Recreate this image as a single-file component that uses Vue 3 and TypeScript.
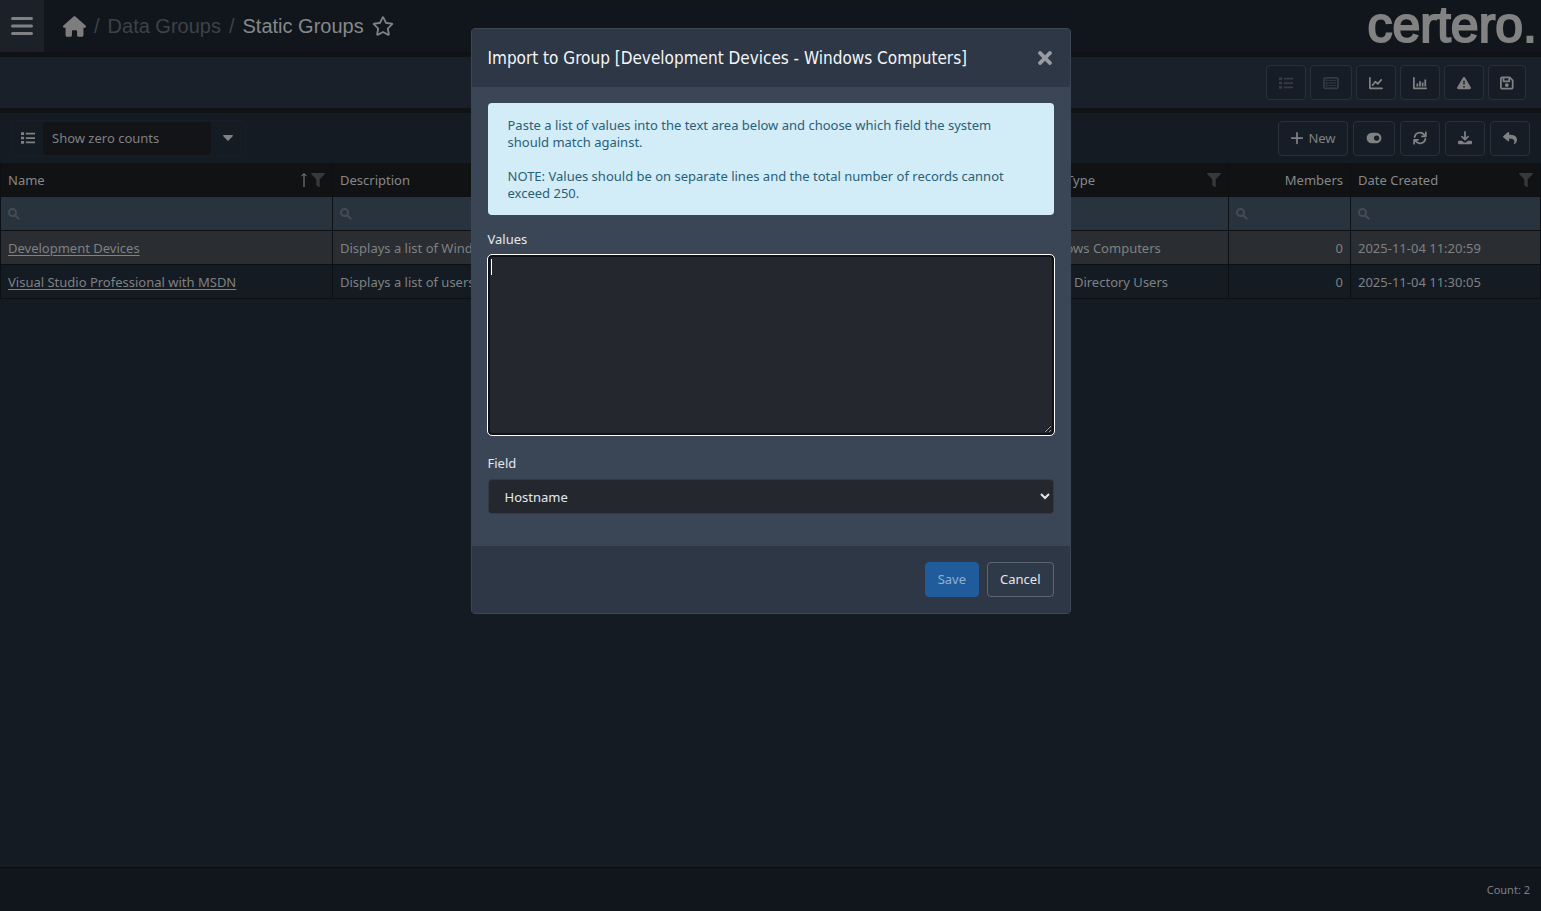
<script setup lang="ts">
import { ref } from 'vue'

interface Shape {
  d: string
  line?: boolean
}
interface Icon {
  box: string
  shapes: Shape[]
}
interface Tool {
  icon: string
  label: string
  text?: string
  size?: string
  off?: boolean
}
interface Row {
  name: string
  description: string
  type: string
  members: number
  created: string
}

const icons: Record<string, Icon> = {
  list: { box: '0 0 16 16', shapes: [{ d: 'M0 1.500h3.500v3H0zM0 6.500h3.500v3H0zM0 11.500h3.500v3H0zM5.500 2H16v2H5.500zM5.500 7H16v2H5.500zM5.500 12H16v2H5.500z' }] },
  tableList: {
    box: '0 0 18 16',
    shapes: [
      { d: 'M2.500 2h13A1.500 1.500 0 0 1 17 3.500v9a1.500 1.500 0 0 1-1.500 1.500h-13A1.500 1.500 0 0 1 1 12.500v-9A1.500 1.500 0 0 1 2.500 2z', line: true },
      { d: 'M3 4h2v2H3zM3 7h2v2H3zM3 10h2v2H3zM6 4.500h9v1H6zM6 7.500h9v1H6zM6 10.500h9v1H6z' },
    ],
  },
  line: { box: '0 0 16 16', shapes: [{ d: 'M1 2v12h14M4 10.500l3.200-4 2.800 2.500L14 4.500', line: true }] },
  bars: { box: '0 0 16 16', shapes: [{ d: 'M1 2v12h14', line: true }, { d: 'M4 8.500h2V12H4zM7 6h2v6H7zM10 7.500h2V12h-2zM13 4h2v8h-2z' }] },
  warning: { box: '0 0 16 16', shapes: [{ d: 'M8 1c.5 0 .9.300 1.200.7l6.500 11.200c.6 1-.1 2.100-1.200 2.100h-13C.4 15-.3 13.900.3 12.900L6.800 1.700C7.100 1.300 7.500 1 8 1zM7.200 5.500v4.300h1.600V5.500zM7.100 11.300v1.800h1.800v-1.800z' }] },
  save: {
    box: '0 0 16 16',
    shapes: [
      { d: 'M2.500 1.500h8.500L14.500 5v8c0 .8-.7 1.500-1.500 1.500H2.500c-.8 0-1.500-.7-1.500-1.500V3c0-.8.7-1.500 1.500-1.500zM4 2v4h6.500V2', line: true },
      { d: 'M7.800 8.200a2.200 2.200 0 1 1 0 4.400 2.200 2.200 0 0 1 0-4.400z' },
    ],
  },
  plus: { box: '0 0 16 16', shapes: [{ d: 'M8 2v12M2 8h12', line: true }] },
  toggle: { box: '0 0 18 16', shapes: [{ d: 'M6.500 2h5a6 6 0 0 1 0 12h-5a6 6 0 0 1 0-12zM12 5a3 3 0 1 0 0 6 3 3 0 0 0 0-6z' }] },
  sync: { box: '0 0 16 16', shapes: [{ d: 'M1.800 7a6.200 6.200 0 0 1 11-2.800L14.300 5.700M14.700 1.500v4.500h-4.500M14.200 9a6.200 6.200 0 0 1-11 2.800L1.700 10.300M1.300 14.500V10h4.500', line: true }] },
  download: {
    box: '0 0 16 16',
    shapes: [
      { d: 'M8 1v8.500M4.500 6.500L8 10l3.500-3.500', line: true },
      { d: 'M1.500 11h3L7 13h2l2.500-2h3c.8 0 1.500.6 1.500 1.400v1.200c0 .8-.7 1.400-1.500 1.400h-13C.7 15 0 14.400 0 13.600v-1.200C0 11.600.7 11 1.500 11z' },
    ],
  },
  reply: {
    box: '0 0 512 512',
    shapes: [{ d: 'M8.309 189.836L184.313 37.851C199.719 24.546 224 35.347 224 56.015v80.053c160.629 1.839 288 34.032 288 186.258 0 61.441-39.581 122.309-83.333 154.132-13.653 9.931-33.111-2.533-28.077-18.631 45.344-145.012-21.507-183.510-176.590-185.742V360c0 20.700-24.300 31.453-39.687 18.164l-176.004-151.990c-11.071-9.562-11.086-26.753 0-36.338z' }],
  },
}

const pageTools: Tool[] = [
  { icon: 'list', label: 'List view', off: true },
  { icon: 'tableList', label: 'Table view', size: 'wide', off: true },
  { icon: 'line', label: 'Line chart' },
  { icon: 'bars', label: 'Bar chart' },
  { icon: 'warning', label: 'Alerts' },
  { icon: 'save', label: 'Save view', size: 'narrow' },
]

const gridTools: Tool[] = [
  { icon: 'plus', label: 'New', text: 'New', size: 'labelled' },
  { icon: 'toggle', label: 'Toggle', size: 'wide' },
  { icon: 'sync', label: 'Refresh' },
  { icon: 'download', label: 'Download' },
  { icon: 'reply', label: 'Back' },
]

const columns = [
  { key: 'name', title: 'Name', filter: true, sorted: true },
  { key: 'description', title: 'Description' },
  { key: 'type', title: 'Data Type', filter: true },
  { key: 'members', title: 'Members' },
  { key: 'created', title: 'Date Created', filter: true },
]

const rows: Row[] = [
  { name: 'Development Devices', description: 'Displays a list of Windows Computers', type: 'Windows Computers', members: 0, created: '2025-11-04 11:20:59' },
  { name: 'Visual Studio Professional with MSDN', description: 'Displays a list of users', type: 'Active Directory Users', members: 0, created: '2025-11-04 11:30:05' },
]

const view = ref('Show zero counts')
const values = ref('')
const field = ref('Hostname')
</script>

<template>
  <div class="page">
    <header class="top">
      <button class="burger" type="button" aria-label="Menu">
        <svg viewBox="0 0 22 20"><path d="M1.500 2.500h19M1.500 10h19M1.500 17.500h19" /></svg>
      </button>
      <nav class="crumbs" aria-label="Breadcrumb">
        <a href="#" class="home" aria-label="Home">
          <svg viewBox="0 0 576 512"><path d="M575.800 255.500c0 18-15 32.100-32 32.100h-32l.7 160.200c0 2.700-.2 5.400-.5 8.100V472c0 22.100-17.900 40-40 40H392c-22.100 0-40-17.900-40-40V384c0-17.700-14.300-32-32-32H256c-17.700 0-32 14.300-32 32v88c0 22.100-17.900 40-40 40H104c-22.100 0-40-17.900-40-40V287.600H32c-18 0-32-14-32-32.100c0-9 3-17 10-24L266.400 8c7-7 15-8 22-8s15 2 21 7L564.800 231.500c8 7 12 15 11 24z" /></svg>
        </a>
        <span class="slash">/</span>
        <a href="#" class="parent">Data Groups</a>
        <span class="slash">/</span>
        <span class="current">Static Groups</span>
        <button class="star" type="button" aria-label="Favourite">
          <svg viewBox="0 0 576 512"><path d="M528.100 171.500L382 150.200 316.700 17.800c-11.700-23.600-45.600-23.900-57.400 0L194 150.200 47.900 171.500c-26.200 3.800-36.700 36.100-17.700 54.600l105.700 103-25 145.500c-4.500 26.300 23.200 46 46.400 33.700L288 439.600l130.700 68.700c23.200 12.200 50.900-7.400 46.400-33.700l-25-145.500 105.700-103c19-18.500 8.500-50.800-17.700-54.600zM388.600 312.300l23.700 138.400L288 385.400l-124.300 65.300 23.700-138.400-100.600-98 139-20.200 62.200-126 62.200 126 139 20.200-100.600 98z" /></svg>
        </button>
      </nav>
      <div class="logo">certero.</div>
    </header>

    <div class="bar page-bar">
      <button v-for="t in pageTools" :key="t.icon" type="button" class="tool" :class="t.size" :disabled="t.off" :aria-label="t.label">
        <svg :viewBox="icons[t.icon].box"><path v-for="s in icons[t.icon].shapes" :key="s.d" :d="s.d" :class="{ line: s.line }" /></svg>
      </button>
    </div>

    <div class="bar grid-bar">
      <div class="view">
        <svg class="view-icon" :viewBox="icons.list.box"><path :d="icons.list.shapes[0].d" /></svg>
        <input v-model="view" type="text" aria-label="View" />
        <button type="button" aria-label="Choose view"><svg viewBox="0 0 10 6"><path d="M.8 0h8.400c.7 0 1 .7.5 1.200L5.600 5.600a.8.8 0 0 1-1.200 0L.3 1.200C-.2.7.1 0 .8 0z" /></svg></button>
      </div>
      <button v-for="t in gridTools" :key="t.icon" type="button" class="tool" :class="t.size" :aria-label="t.label">
        <svg :viewBox="icons[t.icon].box"><path v-for="s in icons[t.icon].shapes" :key="s.d" :d="s.d" :class="{ line: s.line }" /></svg>
        <span v-if="t.text">{{ t.text }}</span>
      </button>
    </div>

    <main class="grid">
      <table>
        <colgroup>
          <col class="c-name" /><col /><col class="c-type" /><col class="c-members" /><col class="c-created" />
        </colgroup>
        <thead>
          <tr class="titles">
            <th v-for="c in columns" :key="c.key" scope="col">
              <div class="title" :class="{ end: c.key === 'members' }">
                <span>{{ c.title }}</span>
                <svg v-if="c.sorted" class="sort" viewBox="0 0 8 16"><path d="M4 15V2M1.500 4.200L4 1.500l2.500 2.700" /></svg>
                <svg v-if="c.filter" class="funnel" viewBox="0 0 512 512"><path d="M487.976 0H24.028C2.710 0-8.047 25.866 7.058 40.971L192 225.941V432c0 7.831 3.821 15.170 10.237 19.662l80 55.980C298.020 518.690 320 507.493 320 487.980V225.941l184.947-184.970C520.021 25.896 509.338 0 487.976 0z" /></svg>
              </div>
            </th>
          </tr>
          <tr class="filters">
            <td v-for="c in columns" :key="c.key">
              <label class="search">
                <svg viewBox="0 0 12 12"><path d="M4.500 1a3.500 3.500 0 1 1 0 7 3.500 3.500 0 0 1 0-7zM7.200 7.200L11.200 11.200" /></svg>
                <input type="text" :aria-label="'Filter ' + c.title" />
              </label>
            </td>
          </tr>
        </thead>
        <tbody>
          <tr v-for="(r, i) in rows" :key="r.name" :class="{ selected: i === 0 }">
            <td><a href="#">{{ r.name }}</a></td>
            <td>{{ r.description }}</td>
            <td>{{ r.type }}</td>
            <td class="num">{{ r.members }}</td>
            <td>{{ r.created }}</td>
          </tr>
        </tbody>
      </table>
    </main>

    <footer class="foot">Count: 2</footer>

    <div class="overlay">
      <form class="modal" role="dialog" aria-labelledby="dialog-title" @submit.prevent>
        <div class="modal-head">
          <h2 id="dialog-title">Import to Group [Development Devices - Windows Computers]</h2>
          <button type="button" aria-label="Close">
            <svg viewBox="0 0 352 352"><path d="M242.720 176l100.070-100.070c12.280-12.280 12.280-32.190 0-44.480l-22.240-22.240c-12.280-12.280-32.190-12.280-44.480 0L176 109.280 75.930 9.210c-12.280-12.280-32.190-12.280-44.480 0L9.210 31.450c-12.280 12.280-12.280 32.190 0 44.480L109.280 176 9.210 276.070c-12.280 12.280-12.280 32.190 0 44.480l22.240 22.240c12.280 12.280 32.200 12.280 44.480 0L176 242.720l100.070 100.070c12.280 12.280 32.200 12.280 44.480 0l22.240-22.240c12.280-12.280 12.280-32.190 0-44.480L242.720 176z" /></svg>
          </button>
        </div>
        <div class="modal-body">
          <div class="info">
            <p>Paste a list of values into the text area below and choose which field the system should match against.</p>
            <p>NOTE: Values should be on separate lines and the total number of records cannot exceed 250.</p>
          </div>
          <label for="values">Values</label>
          <div class="area">
            <textarea id="values" v-model="values"></textarea>
            <span class="caret"></span>
          </div>
          <label for="field">Field</label>
          <select id="field" v-model="field">
            <option>Hostname</option>
          </select>
        </div>
        <div class="modal-foot">
          <button type="submit" class="primary" disabled>Save</button>
          <button type="button">Cancel</button>
        </div>
      </form>
    </div>
  </div>
</template>

<style>
body {
  margin: 0;
  background: #141b23;
}
</style>

<style scoped>
.page,
.page * {
  box-sizing: border-box;
}
.page {
  display: flex;
  flex-direction: column;
  min-height: 100vh;
  background: #141b23;
  color: #7f8183;
  font: 13px/20px 'Noto Sans', sans-serif;
}
button,
input,
select,
textarea {
  margin: 0;
  padding: 0;
  border: 0;
  background: none;
  color: inherit;
  font: inherit;
}
svg {
  display: block;
  flex: none;
  fill: currentColor;
}
.top {
  display: flex;
  align-items: center;
  height: 52px;
  background: #11161c;
}
.burger {
  display: flex;
  align-items: center;
  justify-content: center;
  width: 44px;
  height: 52px;
  background: #1c2129;
}
.burger svg {
  width: 22px;
  height: 20px;
  stroke: #7f8183;
  stroke-width: 3;
  stroke-linecap: round;
}
.crumbs {
  display: flex;
  flex: 1;
  align-items: center;
  gap: 8px;
  margin-left: 19px;
  font: 20px/24px 'Liberation Sans', Arial, sans-serif;
}
.crumbs a {
  color: #3c4248;
  text-decoration: none;
}
.crumbs .home {
  color: #7d7d7e;
}
.home svg {
  width: 23px;
  height: 21px;
}
.slash {
  color: #3c4248;
}
.current {
  color: #85888b;
}
.star svg {
  width: 22px;
  height: 20px;
}
.logo {
  margin-right: 4px;
  padding-bottom: 2px;
  color: #828283;
  font: 50px/52px 'Liberation Sans', Arial, sans-serif;
  -webkit-text-stroke: 2px #828283;
}
.bar {
  display: flex;
  align-items: center;
  border-top: 5px solid #101316;
}
.page-bar {
  justify-content: flex-end;
  gap: 4px;
  height: 56px;
  padding-right: 15px;
  background: #1a2029;
}
.grid-bar {
  gap: 5px;
  height: 55px;
  padding: 0 11px;
}
.tool {
  display: flex;
  align-items: center;
  justify-content: center;
  gap: 4px;
  width: 40px;
  height: 35px;
  border: 1px solid #29303a;
  border-radius: 4px;
  background: #171d26;
  color: #7f8183;
}
.tool:disabled {
  color: #353b43;
}
.tool svg {
  width: 14px;
  height: 14px;
}
.tool.wide svg {
  width: 16px;
}
.tool.wide {
  width: 42px;
}
.tool.narrow {
  width: 38px;
}
.tool.labelled {
  width: 70px;
}
svg .line {
  fill: none;
  stroke: currentColor;
  stroke-width: 2;
  stroke-linejoin: round;
  stroke-linecap: round;
}
.view {
  display: flex;
  align-items: center;
  width: 235px;
  height: 37px;
  margin-right: auto;
  border: 1px solid #171e27;
  border-radius: 4px;
}
.view-icon {
  width: 14px;
  height: 14px;
  margin: 0 8px 0 9px;
}
.view input {
  width: 168px;
  height: 33px;
  padding: 0 9px;
  border-radius: 4px;
  background: #121418;
}
.view button {
  display: flex;
  flex: 1;
  justify-content: center;
}
.view button svg {
  width: 10px;
  height: 6px;
}
.grid {
  flex: 1;
}
table {
  width: 100%;
  border-left: 1px solid #0c1015;
  border-collapse: separate;
  border-spacing: 0;
  table-layout: fixed;
}
.c-name {
  width: 332px;
}
.c-type {
  width: 202px;
}
.c-members {
  width: 122px;
}
.c-created {
  width: 190px;
}
th,
td {
  height: 34px;
  padding: 0 7px;
  overflow: hidden;
  border-right: 1px solid #0c1015;
  border-bottom: 1px solid #0c1015;
  font-weight: 400;
  text-align: left;
  white-space: nowrap;
}
.titles th {
  background: #111214;
  color: #85888b;
}
.title {
  display: flex;
  align-items: center;
}
.title span {
  flex: 1;
}
.title.end {
  text-align: right;
}
.sort {
  width: 8px;
  height: 16px;
  margin-right: 3px;
  fill: none;
  stroke: currentColor;
}
.funnel {
  width: 14px;
  height: 14px;
  color: #36383a;
}
.filters td {
  background: #29333e;
}
.search {
  display: flex;
  align-items: center;
}
.search svg {
  width: 12px;
  height: 12px;
  fill: none;
  stroke: #454b53;
  stroke-width: 2;
}
.search input {
  flex: 1;
  min-width: 0;
}
tbody a {
  color: inherit;
  text-underline-offset: 2px;
}
.selected td {
  background: #2a2d31;
}
.num {
  text-align: right;
}
.foot {
  height: 44px;
  padding: 0 11px;
  border-top: 1px solid #0a0e12;
  background: #11161c;
  font-size: 11px;
  line-height: 44px;
  text-align: right;
}
.overlay {
  position: absolute;
  inset: 0;
  padding-top: 28px;
}
.modal {
  width: 600px;
  margin: 0 auto;
  border: 1px solid #3d4754;
  border-radius: 4px;
  background: #3a4656;
  color: #e4e8ec;
  font: 13px/17px 'Noto Sans', sans-serif;
}
.modal-head {
  display: flex;
  align-items: center;
  justify-content: space-between;
  height: 58px;
  padding: 0 18px 0 16px;
  background: #2d3746;
}
.modal-head h2 {
  margin: 0;
  color: #f4f6f8;
  font: 17px/24px 'DejaVu Sans Condensed', 'Noto Sans', sans-serif;
}
.modal-head svg {
  width: 14px;
  height: 14px;
  color: #979ba2;
}
.modal-body {
  display: flex;
  flex-direction: column;
  padding: 16px 16px 32px;
}
.info {
  margin-bottom: 16px;
  padding: 14px 20px 13px;
  border-radius: 4px;
  background: #d3edf8;
  color: #2a6076;
}
.info p {
  margin: 0 0 17px;
}
.info p:last-child {
  margin: 0;
}
.modal-body label {
  margin-bottom: 7px;
}
.area {
  position: relative;
  margin-bottom: 20px;
}
.area textarea {
  display: block;
  width: 100%;
  height: 180px;
  padding: 4px 8px;
  border: 2px solid #101215;
  border-radius: 4px;
  outline: 1px solid #fff;
  background: #24282e;
  resize: vertical;
}
.caret {
  position: absolute;
  top: 4px;
  left: 3px;
  width: 1px;
  height: 16px;
  background: #fff;
}
.modal-body select {
  height: 35px;
  padding: 0 0 0 12px;
  border: 1px solid #323a45;
  border-radius: 4px;
  background: #24282e;
}
.modal-foot {
  display: flex;
  justify-content: flex-end;
  gap: 8px;
  padding: 16px;
  background: #2d3746;
}
.modal-foot button {
  height: 35px;
  padding: 0 12px;
  border: 1px solid #5c6672;
  border-radius: 4px;
  background: #2f3a48;
}
.modal-foot .primary {
  border-color: #205c9c;
  background: #205c9c;
  color: #93b0cf;
}
</style>
